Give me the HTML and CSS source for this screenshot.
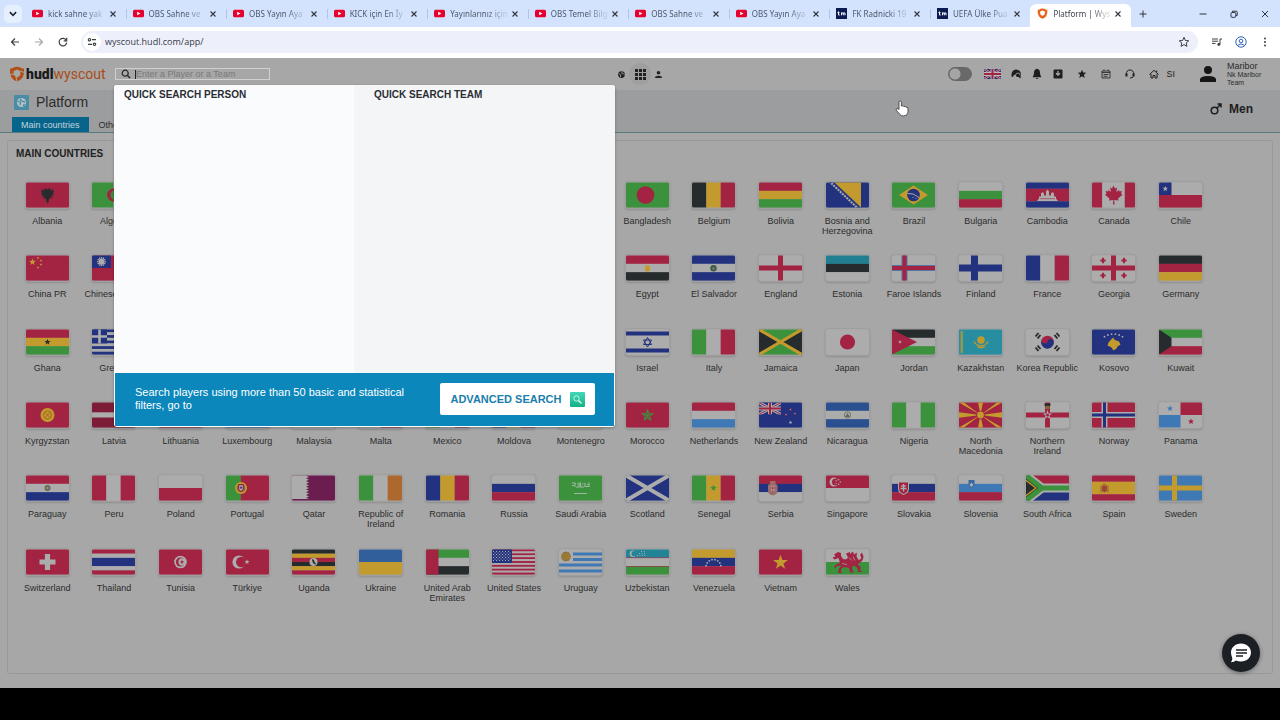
FILE: index.html
```
<!DOCTYPE html>
<html lang="en">
<head>
    <meta charset="UTF-8">
    <meta name="viewport" content="width=device-width, initial-scale=1.0">
    <title>Platform | Wyscout</title>
    <link rel="stylesheet" href="styles.css">
</head>
<body>
    <div class="tab-strip">
        <button class="tab-search" aria-label="Search tabs"><svg viewBox="0 0 8 8"><path d="M1.5 2.5 4 5l2.500-2.500" fill="none" stroke="#1f2430" stroke-width="1.300"/></svg></button>
        <div class="tabs" id="tabs"></div>
        <button class="new-tab" aria-label="New tab"><svg viewBox="0 0 10 10"><path d="M5 1.500v7M1.500 5h7" stroke="#30343c"/></svg></button>
        <div class="window-buttons">
            <button aria-label="Minimize"><svg viewBox="0 0 10 10"><path d="M1.500 5h7" stroke="#30343c"/></svg></button>
            <button aria-label="Restore"><svg viewBox="0 0 10 10"><g fill="none" stroke="#30343c"><rect x="2" y="3.500" width="4.800" height="4.800" rx="1"/><path d="M3.500 3V2.200h3.700q1 0 1 1V6.500H7"/></g></svg></button>
            <button aria-label="Close"><svg viewBox="0 0 10 10"><path d="M2 2l6 6M8 2 2 8" stroke="#30343c"/></svg></button>
        </div>
    </div>

    <div class="toolbar">
        <button aria-label="Back"><svg viewBox="0 0 10 10"><path d="M9 5H1.500M5 1.500 1.500 5 5 8.500" fill="none" stroke="#3c4043" stroke-width="1.200"/></svg></button>
        <button aria-label="Forward"><svg viewBox="0 0 10 10"><path d="M1 5h7.500M5 1.500 8.500 5 5 8.500" fill="none" stroke="#a5a8ac" stroke-width="1.200"/></svg></button>
        <button aria-label="Reload"><svg viewBox="0 0 10 10"><path d="M8.300 3.300A3.800 3.800 0 1 0 8.700 5.700M8.700.800v3H5.700" fill="none" stroke="#3c4043" stroke-width="1.200"/></svg></button>
        <div class="omnibox">
            <button class="site-info" aria-label="Site information"><svg viewBox="0 0 10 10"><g fill="none" stroke="#3c4043" stroke-width="1.200"><circle cx="2.500" cy="2.700" r="1.200"/><path d="M5 2.700h4M1 7.300h4"/><circle cx="7.500" cy="7.300" r="1.200"/></g></svg></button>
            <input type="text" class="url" aria-label="Address" value="wyscout.hudl.com/app/">
            <button aria-label="Bookmark"><svg viewBox="0 0 12 12"><path d="M6 1.300 7.400 4.500l3.400.300-2.600 2.200.8 3.400-3-1.800-3 1.800.8-3.400L1.200 4.800l3.400-.300z" fill="none" stroke="#3c4043"/></svg></button>
        </div>
        <div class="toolbar-end">
            <button aria-label="Media controls"><svg viewBox="0 0 10 10"><path d="M0 2h6M0 4.200h6M0 6.400h3.500M8 7.500V2h2" fill="none" stroke="#3c4043"/><circle cx="6.800" cy="7.500" r="1.400" fill="#3c4043"/></svg></button>
            <button aria-label="Profile"><svg viewBox="0 0 12 12"><g fill="none" stroke="#3563b8"><circle cx="6" cy="6" r="5.200"/><circle cx="6" cy="5" r="1.800"/><path d="M2.500 9.300Q6 6.700 9.500 9.300"/></g></svg></button>
            <button aria-label="Menu"><svg viewBox="0 0 10 10"><g fill="#3c4043"><circle cx="5" cy="1.500" r="1"/><circle cx="5" cy="5" r="1"/><circle cx="5" cy="8.500" r="1"/></g></svg></button>
        </div>
    </div>

    <div class="app">
        <header class="app-header">
            <div class="header-left">
                <a href="#" class="logo">
                    <svg class="logo-mark" viewBox="0 0 16 16"><path d="M1 2.500Q3.500 3 5 1.200 8 .200 11 1.200 12.500 3 15 2.500 15.600 8 13.500 11.500 11.500 14.500 8 15.500 4.500 14.500 2.500 11.500.400 8 1 2.500z" fill="#b04f17"/><path d="M8 3.500 11.500 5.200 11.300 9 8 11.700 4.700 9 4.500 5.200z" fill="#a7a7a7"/><path d="M.300 8.500 5 8M11.500 5 15 6.500M8 15.500 7 11" stroke="#a7a7a7"/></svg>
                    <b>hudl</b><span>wyscout</span>
                </a>
                <div class="search">
                    <label for="quickSearch"><svg viewBox="0 0 10 10"><circle cx="4.200" cy="4.200" r="3" fill="none" stroke="#222" stroke-width="1.200"/><path d="M6.500 6.500 9 9" stroke="#222" stroke-width="1.400"/></svg></label>
                    <i class="caret"></i>
                    <input type="text" id="quickSearch" placeholder="Enter a Player or a Team">
                    <div class="quick-search">
                        <div class="quick-results">
                            <h3>QUICK SEARCH PERSON</h3>
                            <h3>QUICK SEARCH TEAM</h3>
                        </div>
                        <div class="quick-footer">
                            <p>Search players using more than 50 basic and statistical filters, go to</p>
                            <button class="advanced">ADVANCED SEARCH
                                <svg viewBox="0 0 15 15"><defs><linearGradient id="mint" x2="0" y2="1"><stop stop-color="#43d8b8"/><stop offset="1" stop-color="#16b184"/></linearGradient></defs><rect width="15" height="15" rx="1" fill="url(#mint)"/><circle cx="6.500" cy="6.500" r="2.700" fill="none" stroke="#c9f5e6"/><path d="M8.500 8.500 11.500 11.500" stroke="#e9fff8" stroke-width="1.300"/></svg>
                            </button>
                        </div>
                    </div>
                </div>
            </div>
            <nav class="header-nav">
                <button aria-label="World"><svg viewBox="0 0 8 8"><circle cx="4" cy="4" r="3" fill="#222"/><path d="M1.500 3 3.300 4.300 3 6.300M4.500 1.500 4.200 2.800l1.500.4 1 1.300" fill="none" stroke="#a0a0a0" stroke-width=".8"/></svg></button>
                <button class="current" aria-label="Apps"><svg viewBox="0 0 11 11"><path d="M0 1.500h11M0 5.500h11M0 9.500h11" stroke="#222" stroke-width="3" stroke-dasharray="3 1"/></svg></button>
                <button aria-label="Person"><svg viewBox="0 0 8 8"><circle cx="4" cy="2.500" r="1.600" fill="#222"/><path d="M1 7V6q3-2 6 0v1z" fill="#222"/></svg></button>
            </nav>
            <div class="header-right">
                <input type="checkbox" class="toggle" aria-label="Toggle theme">
                <div class="tools tight">
                    <svg class="uk" viewBox="0 0 17 10"><path fill="#27316f" d="M0 0h17v10H0z"/><path d="M0 0 17 10M17 0 0 10" stroke="#bbb" stroke-width="2"/><path d="M0 0 17 10M17 0 0 10" stroke="#a32343"/><path d="M8.500 0v10M0 5h17" stroke="#bbb" stroke-width="4"/><path d="M8.500 0v10M0 5h17" stroke="#a32343" stroke-width="2"/></svg>
                    <button aria-label="Chat"><svg viewBox="0 0 12 12"><path d="M3 9 1.500 8.500Q1 2 6 1.500q4.500.3 5 4.500l-.5 4.500L8.500 9Q6 9.500 5.700 7L4 6.800z" fill="#1e1e1e"/><path d="M5.500 7.500Q5.500 5 8 5t2 2.500" fill="none" stroke="#a7a7a7" stroke-width=".8"/></svg></button>
                    <button aria-label="Notifications"><svg viewBox="0 0 12 12"><path d="M6 .800q3 .700 3 4 0 3.200 1.500 4.400h-9Q3 8 3 4.800q0-3.300 3-4zM4.700 10h2.600Q6 12 4.700 10z" fill="#1e1e1e"/></svg></button>
                    <button aria-label="Downloads"><svg viewBox="0 0 12 12"><rect x="1.500" y="1.500" width="9" height="9" rx="1.200" fill="#1e1e1e"/><path d="M6 3v4M4 5.200 6 7.200l2-2" fill="none" stroke="#aaa" stroke-width="1.300"/></svg></button>
                </div>
                <div class="tools">
                    <button aria-label="Favourites"><svg viewBox="0 0 12 12"><path d="M6 1.800 7.200 4.600l3.100.2-2.400 2 .8 3.100L6 8.200 3.300 9.900l.8-3.100-2.400-2 3.100-.200z" fill="#1e1e1e"/></svg></button>
                    <button aria-label="Calendar"><svg viewBox="0 0 12 12"><path d="M2 3h8v7H2zM2 4.500h8M4 1.500V3M8 1.500V3M3.500 6.500h5M3.500 8.300h4" fill="none" stroke="#1e1e1e" stroke-width=".8"/></svg></button>
                    <button aria-label="Support"><svg viewBox="0 0 12 12"><path d="M2.200 6.500Q2.200 2 6 2t3.800 4.500M9.500 8.500Q8.500 10 6 10" fill="none" stroke="#1e1e1e"/><path d="M1.500 5.500h2v3h-2zM8.500 5.500h2v3h-2z" fill="#1e1e1e"/></svg></button>
                    <button aria-label="Home"><svg viewBox="0 0 12 12"><path d="M1.500 6.500 6 2.300l4.500 4.200M3 6v4h2V7.500h2V10h2V6M8.700 4V2.500" fill="none" stroke="#1e1e1e"/></svg></button>
                </div>
                <span class="lang">SI</span>
                <svg class="avatar" viewBox="0 0 16 16"><circle cx="8" cy="4" r="4" fill="#161616"/><path d="M0 16v-3q1-3 8-3t8 3v3z" fill="#161616"/></svg>
                <div class="user">
                    <div>Maribor</div>
                    <small>Nk Maribor Team</small>
                </div>
            </div>
        </header>

        <div class="sub-header">
            <div>
                <div class="page-title">
                    <svg viewBox="0 0 15 15"><rect width="15" height="15" rx="1" fill="#4a8ca6"/><circle cx="7.500" cy="7.500" r="4.500" fill="#b5c3c8"/><path d="M3.500 6 6.500 7.500 6 10M7 3.500 6.500 5.500 9 6.500l2 .5M9 11l1.500-2" fill="none" stroke="#4a8ca6" stroke-width="1.300"/></svg>
                    <h1>Platform</h1>
                </div>
                <nav class="page-tabs">
                    <a href="#" class="active">Main countries</a>
                    <a href="#">Other countries</a>
                </nav>
            </div>
            <button class="gender"><svg viewBox="0 0 12 12"><circle cx="4.500" cy="7.500" r="3.300" fill="none" stroke="#1c1c1c" stroke-width="1.500"/><path d="M7 5 11 1M7.500 1H11v3.500" fill="none" stroke="#1c1c1c" stroke-width="1.500"/></svg>Men</button>
        </div>

        <main class="panel">
            <h2>MAIN COUNTRIES</h2>
            <ul class="countries" id="countries"></ul>
        </main>
    </div>

    <button class="chat" aria-label="Open chat"><svg viewBox="0 0 22 22"><path d="M11 1.500c5.800 0 10 4 10 9s-4.200 9-10 9q-3 0-5-1-2 1.800-5 1.800 1.500-1.800 1.300-4.300Q1 13.500 1 10.500c0-5 4.200-9 10-9z" fill="#fff"/><path d="M6 8h11M6 11h11M6 14h7" stroke="#1c2024" stroke-width="1.500"/></svg></button>
    <svg class="pointer" viewBox="0 0 14 17"><path d="M4 9V2.200q0-1.200 1.200-1.200t1.200 1.200V6q2-.800 2.400.600 1.800-.600 2.200.600 2-.400 2 1.500v3.500Q12.500 16 8.500 16 6 16 4.500 14L1.300 10.200Q.600 8.800 2 8.500q1-.100 2 1z" fill="#fff" stroke="#333" stroke-width=".8"/></svg>

    <script>
        const R = "#a32343", G = "#3c913d", Y = "#c39a2d", B = "#22327f", K = "#262b2d", W = "#acacac", L = "#3e79b5";

        function rect(x, y, w, h, c) { return `<rect x="${x}" y="${y}" width="${w}" height="${h}" fill="${c}"/>`; }
        function dot(x, y, r, c) { return `<circle cx="${x}" cy="${y}" r="${r}" fill="${c}"/>`; }
        function path(d, c) { return `<path d="${d}" fill="${c}"/>`; }
        function line(d, c, w) { return `<path d="${d}" fill="none" stroke="${c}" stroke-width="${w}"/>`; }
        // horizontal and vertical stripes, equal unless sizes are given
        function rows(colors, sizes) {
            let y = 0, out = "", s = sizes || colors.map(() => 1), t = s.reduce((a, b) => a + b);
            colors.forEach((c, i) => { const h = 25 * s[i] / t; out += rect(0, y, 43, h + 0.1, c); y += h; });
            return out;
        }
        function cols(colors, sizes) {
            let x = 0, out = "", s = sizes || colors.map(() => 1), t = s.reduce((a, b) => a + b);
            colors.forEach((c, i) => { const w = 43 * s[i] / t; out += rect(x, 0, w + 0.1, 25, c); x += w; });
            return out;
        }
        function star(cx, cy, r, c) {
            let p = [];
            for (let i = 0; i < 10; i++) {
                const q = i % 2 ? r * 0.4 : r, a = Math.PI * (i / 5 - 0.5);
                p.push((cx + q * Math.cos(a)).toFixed(2) + "," + (cy + q * Math.sin(a)).toFixed(2));
            }
            return `<polygon points="${p.join(" ")}" fill="${c}"/>`;
        }
        function plus(x, y, s, w, c) { return line(`M${x} ${y - s}v${2 * s}M${x - s} ${y}h${2 * s}`, c, w); }
        function cross(x, w, c) { return line(`M${x} 0v25M0 12.5h43`, c, w); }
        function moon(x, y, r, c, bg) { return dot(x, y, r, c) + dot(x + r * 0.35, y, r * 0.8, bg); }
        function union(w, h) {
            return `<svg width="${w}" height="${h}" viewBox="0 0 22 12" preserveAspectRatio="none">` + rect(0, 0, 22, 12, B) +
                line("M0 0 22 12M22 0 0 12", W, 3) + line("M0 0 22 12M22 0 0 12", R, 1) +
                line("M11 0v12M0 6h22", W, 4) + line("M11 0v12M0 6h22", R, 2) + "</svg>";
        }
        function ring(n, cx, cy, r, from, to, size, c) {
            let out = "";
            for (let i = 0; i < n; i++) {
                const a = (from + (to - from) * i / (n - 1)) * Math.PI / 180;
                out += dot(cx + r * Math.cos(a), cy + r * Math.sin(a), size, c);
            }
            return out;
        }

        const flags = [
            ["Albania", rows([R]) + path("M21.500 7.500 20 5.500l-1.500 1 .5 1.500-3.500-1.500.8 2-1.800.5 1.800 1.500-1.300 1.500 2 .2-1 2 2.400-.5-1.400 3 2.500-1.500 1 4 1 1.500 1-1.500 1-4 2.500 1.500-1.400-3 2.400.5-1-2 2-.2-1.300-1.500 1.800-1.500-1.800-.5.8-2L24 8l.5-1.500-1.500-1z", K)],
            ["Algeria", cols([G, W]) + moon(21.5, 12.5, 6.5, R, G) + star(24, 12.5, 3, R)],
            ["Bangladesh", rows([G]) + dot(19.5, 12.5, 8.8, R), 10],
            ["Belgium", cols([K, Y, R])],
            ["Bolivia", rows([R, Y, G])],
            ["Bosnia and Herzegovina", rows([B]) + path("M8.500 0H35v25z", Y) + line("M4.500 0 31 25", W, 2) + line("M4.500 0 31 25", B, "2.2\" stroke-dasharray=\"1 2")],
            ["Brazil", rows([G]) + path("M21.500 3 36 12.500 21.500 22 7 12.500z", Y) + dot(21.5, 12.5, 6.3, B) + line("M15.500 11Q21 10 27 15", W, 1) + dot(21, 15, 0.6, W) + dot(24, 16, 0.5, W)],
            ["Bulgaria", rows([W, G, R])],
            ["Cambodia", rows([B, R, B], [1, 2, 1]) + path("M11 18.500 13 16v-2h2v-3l1.500-1.500L18 11v2h2V9l1.500-2L23 9v4h2v-2l1.500-1.500L28 11v3h2v2l2 2.500z", W) + line("M14 16.200h15", R, 0.6)],
            ["Canada", cols([R, W, R], [1, 2.2, 1]) + path("M21.500 3 23 6l2-1-.6 4.500L27 7.500l.5 1.500 2.500-.5-1 2.700 1.500 1-4.500 3.800.5 2-4.300-.5.300 4.500h-1.500l.3-4.500-4.300.5.5-2-4.500-3.800 1.500-1-1-2.700 2.500.5.5-1.500 2.600 2L18 5l2 1z", R)],
            ["Chile", rows([W, R]) + rect(0, 0, 12.500, 12.500, B) + star(6.3, 6.2, 3, W)],
            ["China PR", rows([R]) + star(6.5, 6.500, 3.600, Y) + star(12, 2.500, 1.500, Y) + star(15, 5, 1.500, Y) + star(15, 9, 1.500, Y) + star(12, 12, 1.500, Y)],
            ["Chinese Taipei", rows([R]) + rect(0, 0, 19, 12.500, B) + ring(12, 9.5, 6.2, 3.8, 0, 330, 0.8, W) + dot(9.5, 6.2, 3, W)],
            ["Egypt", rows([R, W, K]) + path("M19 10h5v5l-2.500 1.500L19 15z", Y), 10],
            ["El Salvador", rows([B, W, B]) + dot(21.5, 12.8, 3.2, "#3c5950") + dot(21.5, 13, 1.3, "#817b56")],
            ["England", rows([W]) + cross(21.5, 5, R)],
            ["Estonia", rows(["#217f94", K, W])],
            ["Faroe Islands", rows([W]) + cross(12.5, 6, "#5474a2") + cross(12.5, 4, R)],
            ["Finland", rows([W]) + cross(15.5, 7, B)],
            ["France", cols([B, W, R])],
            ["Georgia", rows([W]) + cross(21.5, 5, R) + plus(11, 5, 2.7, 2, R) + plus(32, 5, 2.7, 2, R) + plus(11, 20, 2.7, 2, R) + plus(32, 20, 2.7, 2, R)],
            ["Germany", rows([K, R, Y])],
            ["Ghana", rows([R, Y, G]) + star(21.5, 12.5, 3.3, K)],
            ["Greece", rows([B, W, B, W, B, W, B, W, B]) + rect(0, 0, 15, 13.9, B) + line("M7.500 0v13.900M0 7h15", W, 2.600)],
            ["Israel", rows([W]) + rect(0, 2, 43, 4, B) + rect(0, 19, 43, 4, B) + line("M21.500 8 25.500 15h-8zM21.500 17.500 17.500 10.500h8z", B, 1), 10],
            ["Italy", cols([G, W, R])],
            ["Jamaica", rows([G]) + path("M0 0 21.500 12.500 0 25zM43 0 21.500 12.500 43 25z", K) + line("M0 0 43 25M43 0 0 25", Y, 3.2)],
            ["Japan", rows([W]) + dot(21.5, 12.5, 7.6, R)],
            ["Jordan", rows([K, W, G]) + path("M0 0 25 12.500 0 25z", R) + star(8, 12.5, 2, W)],
            ["Kazakhstan", rows(["#278da0"]) + rect(1.500, 1.500, 2.500, 22, "#93984f") + dot(22, 10.5, 3.7, Y) + line("M15 12q2 4 7 4.500 5-.5 7-4.500M18 17q4 2.500 8 0", Y, 1.300)],
            ["Korea Republic", rows([W]) + dot(21.5, 12.5, 6.3, R) + path("M15.600 10.500a3.200 3.200 0 0 0 5.900 2 3.200 3.200 0 0 1 6-1.300 6.300 6.300 0 1 1-11.900-.7z", B) + line("M9.500 7 12.500 3.500M11.500 9 14.500 5.500M28.500 5.500 31.500 9M30.500 3.500 33.500 7M9.500 18l3 3.500M11.500 16l3 3.500M28.500 19.500l3-3.500M30.500 21.500 33.500 18", K, 1.900)],
            ["Kosovo", rows([B]) + path("M21 8l2 2.500 4 1.500 1.500 3-3 2-1 2-3 2-2-3-4-2 1-3z", Y) + ring(6, 21.5, 21, 16.500, -123, -57, 0.9, W)],
            ["Kuwait", rows([G, W, R]) + path("M0 0 12.500 8.300v8.400L0 25z", K)],
            ["Kyrgyzstan", rows([R]) + dot(21.5, 12.5, 7, Y) + `<circle cx="21.500" cy="12.500" r="4" fill="none" stroke="#a66525"/>` + line("M19 10 24 15M24 10 19 15", "#a66525", 1)],
            ["Latvia", rows(["#7d1c36", W, "#7d1c36"], [2, 1, 2])],
            ["Lithuania", rows([Y, G, R])],
            ["Luxembourg", rows([R, W, L])],
            ["Malaysia", rows([R, W, R, W, R, W, R, W]) + rect(0, 0, 21, 12, B)],
            ["Malta", cols([W, R])],
            ["Mexico", cols([G, W, R])],
            ["Moldova", cols([B, Y, R])],
            ["Montenegro", rows([Y]) + rect(2, 2, 39, 21, R)],
            ["Morocco", rows([R]) + star(21.5, 13, 7, G) + star(21.5, 13, 3.500, R) + dot(21.5, 13, 1.400, G)],
            ["Netherlands", rows([R, W, L])],
            ["New Zealand", rows([B]) + union(22, 12) + star(31.5, 7, 1.800, R) + star(27, 12, 1.800, R) + star(36, 11, 1.800, R) + star(31.500, 20, 2, W) + star(31.500, 7, 1, W) + star(27, 12, 1, W) + star(36, 11, 1, W)],
            ["Nicaragua", rows(["#2b5090", W, "#2b5090"]) + `<circle cx="21.500" cy="12.500" r="3.200" fill="none" stroke="#777a5e"/>` + path("M21.500 10.500 24 14.500h-5z", "#566b69")],
            ["Nigeria", cols([G, W, G])],
            ["North Macedonia", rows([R]) + path("M0 0h5l16.500 12.500L38 0h5L21.500 12.500 43 25h-5L21.500 12.500 5 25H0l21.500-12.500zM19 0h5l-2.500 12.500L24 25h-5l2.500-12.500zM0 9.800 21.500 12.500 0 15.200zM43 9.800 21.500 12.500 43 15.200z", Y) + dot(21.5, 12.5, 4.300, R) + dot(21.5, 12.5, 3.400, Y)],
            ["Northern Ireland", rows([W]) + cross(21.5, 5, R) + star(21.5, 12.5, 5, W) + dot(21.5, 12.5, 1.500, R) + rect(19.500, 3, 4, 3.500, "#7c6a37") + rect(18.500, 1, 6, 2.300, K)],
            ["Norway", rows([R]) + cross(12.5, 6, W) + cross(12.5, 3, B)],
            ["Panama", rows([W]) + rect(21.500, 0, 21.500, 12.500, R) + rect(0, 12.500, 21.500, 12.500, L) + star(11, 6, 3.300, L) + star(32, 19, 3.300, R)],
            ["Paraguay", rows([R, W, B]) + dot(21.5, 12.5, 3, "#68685b") + dot(21.5, 12.5, 1.200, "#998f60")],
            ["Peru", cols([R, W, R])],
            ["Poland", rows([W, R])],
            ["Portugal", cols([G, R], [1, 1.900]) + dot(15, 12.5, 6, Y) + dot(15, 12.5, 4.300, "#7d7134") + path("M12 8.500h6v5q0 2-3 3-3-1-3-3z", R) + path("M13.200 9.700h3.600v3.800q0 1-1.800 1.800-1.800-.800-1.800-1.800z", W) + plus(15, 12.2, 1.2, 0.9, B)],
            ["Qatar", rows(["#6b1d50"]) + path("M0 0h14l3 1.400-3 1.400 3 1.400-3 1.400L17 7l-3 1.400 3 1.400-3 1.400 3 1.300-3 1.400 3 1.400-3 1.400 3 1.400-3 1.400 3 1.400-3 1.400 3 1.300H0z", W)],
            ["Republic of Ireland", cols([G, W, "#ae682e"])],
            ["Romania", cols([B, Y, R])],
            ["Russia", rows([W, B, R])],
            ["Saudi Arabia", rows([G]) + line("M13 7.500h3v4M17 11.500h3V7M21.500 7v4.500H25M26 7.500v3.500h4V7M13 10h2M18 8.500h1M23 8.500h1.500M28 9h1", "#a0b89e", 1.200) + line("M15 18h13", "#a0b89e", 1)],
            ["Scotland", rows([B]) + line("M0 0 43 25M43 0 0 25", W, 4)],
            ["Senegal", cols([G, Y, R]) + star(21.5, 12.5, 3.500, G)],
            ["Serbia", rows([R, B, W]) + path("M11 5.500h5.500v3l2 1v6q0 3-4.700 4.500Q9 18.500 9 15.500v-6l2-1z", "#9b6d68") + rect(12.300, 10, 3.200, 6, W) + line("M13.900 10v7M12 12.500h4", R, 0.8)],
            ["Singapore", rows([R, W]) + moon(8, 6.500, 4.500, W, R) + ring(5, 12, 6.5, 2.300, 0, 288, 0.700, W)],
            ["Slovakia", rows([W, B, R]) + path("M6 6h11v7q0 4.500-5.500 6.500Q6 17.500 6 13z", W) + path("M7 7h9v6q0 3.800-4.500 5.500Q7 16.800 7 13z", R) + line("M11.500 8.500V16M9.300 10.500h4.400M8.500 13h6", W, 1.300)],
            ["Slovenia", rows([W, L, R]) + path("M9.500 4.500h6v4q0 2.500-3 4-3-1.500-3-4z", "#3469a3") + path("M10.500 9.500 12.500 7l2 2.500-2 2z", W)],
            ["South Africa", rows([R, B]) + line("M0 0 16 12.500 0 25M16 12.500h27", W, 9) + path("M0 0 16 12.500 0 25z", K) + line("M0 0 16 12.500 0 25M16 12.500h27", G, 5) + path("M0 4 11 12.500 0 21z", Y) + path("M0 5.800 8.800 12.500 0 19.200z", K)],
            ["Spain", rows([R, Y, R], [1, 2, 1]) + path("M10 10h5v5.500l-2.500 1.500-2.500-1.500z", "#9a4939") + line("M9 10v7M16 10v7M11 8.800h3", "#93602e", 1)],
            ["Sweden", rows([L]) + cross(15.5, 5, Y)],
            ["Switzerland", rows([R]) + plus(21.5, 12.5, 8, 5.200, W)],
            ["Thailand", rows([R, W, B, W, R], [1, 1, 2, 1, 1])],
            ["Tunisia", rows([R]) + dot(21.5, 12.5, 6.300, W) + moon(21.5, 12.5, 4.600, R, W) + star(23, 12.5, 2.300, R)],
            ["Türkiye", rows([R]) + moon(13, 12.5, 6.600, W, R) + star(21, 12.5, 2.800, W)],
            ["Uganda", rows([K, Y, R, K, Y, R]) + dot(21.5, 12.5, 4, W) + path("M20 9.500l2 1 .5 2 2 2.500-2.500-.500-1.500-2z", K)],
            ["Ukraine", rows(["#315f9c", Y])],
            ["United Arab Emirates", rows([G, W, K]) + rect(0, 0, 12.500, 25, R)],
            ["United States", rows([R, W, R, W, R, W, R, W, R, W, R, W, R]) + rect(0, 0, 20, 13.500, B) + line("M1 2h18M1 5h18M1 8h18M1 11h18", W, "1\" stroke-dasharray=\"1 2") + line("M2.500 3.500h17M2.500 6.500h17M2.500 9.500h17", W, "1\" stroke-dasharray=\"1 2")],
            ["Uruguay", rows([W]) + rect(14, 3, 29, 3, L) + rect(14, 8.500, 29, 3, L) + rect(0, 14, 43, 3, L) + rect(0, 20, 43, 3, L) + ring(12, 7, 7, 4, 0, 330, 1.100, "#89703a") + dot(7, 7, 3.500, "#9c792c")],
            ["Uzbekistan", rows(["#218597", W, G]) + rect(0, 8, 43, 0.6, R) + rect(0, 16.500, 43, 0.6, R) + moon(7, 4.200, 3.300, W, "#218597") + line("M11 6h9M13 4h7M15 2h5", W, "1\" stroke-dasharray=\"1 1.5")],
            ["Venezuela", rows([Y, B, R]) + ring(8, 21.5, 17.500, 7.500, -170, -10, 0.900, W)],
            ["Vietnam", rows([R]) + star(21.5, 13, 7.800, Y)],
            ["Wales", rows([W, G]) + path("M8 5 12 2.500l3 1v3l2 3 3 .500 2-2L20 4l4-1.500V4.500l3-2.500L28 5l3-2-.5 4 2 3.500q3.500-1 2.500-3.500l-1-1.500L36 3l1.500 4q-.5 5-4 6l-1.500 2 3 3-1 3 3 1.500h-5l-.500-4-3.500-2.500-2 1.500 1 4.500 1.500 1h-4.500l-1-4.500-5-1-3 2v3l2 1h-5l1-4.500 2.500-3-4 .500-2.500 2-1-1.500 3-2.500 3-1-1.500-5-4 1.500L6.500 8l3-1z", R) + line("M23 8l3 3M27 7l2 4M16 14l5 1", W, 0.7)]
        ];

        const list = document.getElementById("countries");
        flags.forEach(([name, art, column]) => {
            list.innerHTML += `<li${column ? ' class="after-search"' : ""}><a href="#">
                <svg viewBox="0 0 43 25" aria-hidden="true">${art}</svg>
                <span>${name}</span>
            </a></li>`;
        });

        const youtube = `<svg viewBox="0 0 11 11">${path("M1.500 1.800h8q1.500 0 1.500 1.500v4.400q0 1.500-1.500 1.500h-8Q0 9.200 0 7.700V3.300q0-1.500 1.500-1.500z", "#e6002d")}${path("M4.200 3.700 7.500 5.500 4.200 7.300z", "#fff")}</svg>`;
        const tm = `<svg viewBox="0 0 11 11">${rect(0, 0, 11, 11, "#0c1a52")}${line("M2.500 3.500v3.500h1.200M1.500 4.600h2M5.500 7.300V4.500M5.500 5h3.500v2.300M7.300 5v2.300", "#fff", 1)}</svg>`;
        const wyscout = `<svg viewBox="0 0 16 16">${path("M1 2.500Q3.500 3 5 1.200 8 .200 11 1.200 12.500 3 15 2.500 15.600 8 13.500 11.500 11.500 14.500 8 15.500 4.500 14.500 2.500 11.500.400 8 1 2.500z", "#e8641b")}${path("M8 3.500 11.500 5.200 11.300 9 8 11.700 4.700 9 4.500 5.200z", "#fff")}</svg>`;
        const tabs = [
            ["kick sahne yak", youtube], ["OBS Sahne ve", youtube], ["OBS Yayın Aya", youtube],
            ["KICK için En İy", youtube], ["Yayınlarınız için", youtube], ["OBS Temel Bilg", youtube],
            ["OBS Sahne ve", youtube], ["OBS Yayın Aya", youtube], ["FK Radnicki 19", tm],
            ["UEFA Ülke Pua", tm], ["Platform | Wys", wyscout]
        ];
        document.getElementById("tabs").innerHTML = tabs.map(([title, icon], i) => `
            <div class="tab${i === tabs.length - 1 ? " open" : ""}">
                ${icon}<span>${title}</span>
                <button aria-label="Close tab"><svg viewBox="0 0 8 8">${line("M1.500 1.500l5 5M6.500 1.500l-5 5", "#30343c", 1.1)}</svg></button>
            </div>`).join("");
    </script>
</body>
</html>
```
FILE: styles.css
```
* {
    box-sizing: border-box;
}
body {
    margin: 0;
    min-height: 100vh;
    padding-bottom: 32px;
    display: flex;
    flex-direction: column;
    position: relative;
    background: #000;
    color: #2c2c2c;
    font-family: "Liberation Sans", Arial, sans-serif;
    font-size: 9px;
}
h1, h2, h3, p, ul {
    margin: 0;
    padding: 0;
}
button {
    display: flex;
    align-items: center;
    justify-content: center;
    padding: 0;
    border: none;
    background: none;
    font-family: inherit;
    cursor: pointer;
}
button svg {
    width: 10px;
    height: 10px;
}
a {
    color: inherit;
    text-decoration: none;
}

/* browser tabs */
.tab-strip {
    height: 27px;
    display: flex;
    align-items: center;
    background: #d4e3fd;
    font-family: "Noto Sans", "Open Sans", sans-serif;
    font-size: 8px;
}
.tab-search {
    width: 18px;
    height: 18px;
    margin: 0 3px 0 4px;
    border-radius: 5px;
    background: #e6effe;
}
.tabs {
    flex: 1;
    display: flex;
    align-self: stretch;
    min-width: 0;
}
.tab {
    flex: 1;
    min-width: 0;
    display: flex;
    align-items: center;
    padding: 0 9px 0 7px;
    color: #4c586c;
}
.tab + .tab:not(.open) {
    background: linear-gradient(#b3c5e4, #b3c5e4) 0 50% / 1px 10px no-repeat;
}
.tab > svg {
    width: 11px;
    height: 11px;
    flex: none;
}
.tab span {
    flex: 1;
    margin-left: 5px;
    white-space: nowrap;
    -webkit-mask-image: linear-gradient(to right, #000 60%, rgba(0, 0, 0, 0.2) 90%);
    mask-image: linear-gradient(to right, #000 60%, rgba(0, 0, 0, 0.2) 90%);
}
.tab button svg {
    width: 8px;
    height: 8px;
}
.tab.open {
    margin-top: 4px;
    padding-bottom: 4px;
    border-radius: 6px 6px 0 0;
    background: #fff;
    color: #3a3f48;
}
.new-tab {
    width: 24px;
}
.window-buttons {
    display: flex;
    width: 125px;
    padding-left: 33px;
}
.window-buttons button {
    flex: 1;
}

/* address bar */
.toolbar {
    height: 31px;
    display: flex;
    align-items: center;
    gap: 14px;
    padding: 0 10px 2px;
    background: #fff;
}
.omnibox {
    flex: 1;
    height: 22px;
    display: flex;
    align-items: center;
    margin-left: -1px;
    padding: 0 8px 0 2px;
    border-radius: 11px;
    background: #edf0fb;
}
.site-info {
    width: 18px;
    height: 18px;
    border-radius: 50%;
    background: #fff;
}
.omnibox button:last-child svg {
    width: 12px;
    height: 12px;
}
.url {
    flex: 1;
    margin-left: 4px;
    padding: 0;
    border: none;
    background: none;
    color: #363b44;
    font: 9px "Open Sans", "Noto Sans", sans-serif;
}
.toolbar-end {
    display: flex;
    gap: 13px;
}
.toolbar-end button:nth-child(2) svg {
    width: 12px;
    height: 12px;
}

/* application */
.app {
    flex: 1;
    display: flex;
    flex-direction: column;
    background: #a7a7a7;
}
.app-header {
    height: 32px;
    display: grid;
    grid-template-columns: 1fr auto 1fr;
    align-items: center;
    padding: 0 15px 0 9px;
}
.header-left, .header-right, .tools {
    display: flex;
    align-items: center;
}
.logo {
    display: flex;
    align-items: center;
    width: 106px;
    font-family: Roboto, sans-serif;
    font-size: 14px;
    color: #1b1b1b;
}
.logo b {
    font-weight: 900;
}
.logo span {
    color: #a94c18;
}
.logo-mark {
    width: 16px;
    height: 16px;
    margin-right: 1px;
}
.search {
    position: relative;
    width: 155px;
    height: 12px;
    display: flex;
    align-items: center;
    border: 1px solid #d0d0d0;
}
.search label {
    width: 19px;
    height: 10px;
    padding-left: 5px;
}
.search label svg {
    width: 10px;
    height: 10px;
    display: block;
}
.caret {
    width: 1px;
    height: 9px;
    background: #222;
}
.search input {
    flex: 1;
    min-width: 0;
    padding: 0;
    border: none;
    outline: none;
    background: none;
    font: 9px/10px "Liberation Sans", Arial, sans-serif;
}
.search input::placeholder {
    color: #797979;
}
.quick-search {
    position: absolute;
    top: 16px;
    left: -2px;
    z-index: 2;
    width: 501px;
    border-radius: 3px;
    overflow: hidden;
    background: #fff;
    box-shadow: 0 1px 3px rgba(0, 0, 0, 0.3);
}
.quick-results {
    display: grid;
    grid-template-columns: 240px 1fr;
    height: 288px;
}
.quick-results h3 {
    padding: 4px 10px;
    background: #fafbfd;
    color: #2a2d33;
    font-size: 10px;
    line-height: 11px;
}
.quick-results h3 + h3 {
    padding-left: 20px;
    background: #f4f5f7;
}
.quick-footer {
    display: flex;
    align-items: center;
    justify-content: space-between;
    margin: 0 1px 1px;
    padding: 10px 19px 11px 20px;
    background: #0b87bb;
}
.quick-footer p {
    width: 290px;
    color: #fff;
    font-size: 11px;
    line-height: 13px;
}
.advanced {
    width: 155px;
    height: 32px;
    gap: 8px;
    border-radius: 2px;
    background: #fff;
    color: #1b7eac;
    font-size: 11px;
    font-weight: bold;
    white-space: nowrap;
}
.advanced svg {
    width: 15px;
    height: 15px;
}
.header-nav {
    display: flex;
    align-items: center;
    gap: 3px;
    padding-left: 6px;
}
.header-nav button svg {
    width: 9px;
    height: 9px;
}
.header-nav .current {
    width: 22px;
    height: 22px;
    border-radius: 50%;
    background: #9f9f9f;
}
.header-nav .current svg {
    width: 11px;
    height: 11px;
}
.header-right {
    justify-content: flex-end;
}
.toggle {
    appearance: none;
    width: 24px;
    height: 14px;
    margin: 0 12px 0 0;
    border: 1px solid #666;
    border-radius: 7px;
    background: radial-gradient(circle at 6px 6px, #a5a5a5 5px, #696969 6px);
}
.tools {
    gap: 12px;
}
.tools.tight {
    gap: 9px;
    margin-right: 12px;
}
.tools svg {
    width: 12px;
    height: 12px;
}
.tools .uk {
    width: 17px;
    height: 10px;
}
.lang {
    margin: 0 25px 0 6px;
    color: #1e1e1e;
}
.avatar {
    width: 16px;
    height: 16px;
    margin-right: 11px;
}
.user {
    width: 38px;
    line-height: 9px;
}
.user small {
    display: block;
    font-size: 7px;
    line-height: 8px;
}
.sub-header {
    height: 43px;
    display: flex;
    align-items: center;
    justify-content: space-between;
    padding: 0 27px 0 12px;
    border-bottom: 1px solid #587a7d;
    background: #9c9d9e;
}
.page-title {
    display: flex;
    align-items: center;
    gap: 7px;
    height: 24px;
    margin-bottom: 3px;
    padding-left: 2px;
}
.page-title svg {
    width: 15px;
    height: 15px;
}
.page-title h1 {
    font-size: 14px;
    font-weight: normal;
}
.page-tabs {
    display: flex;
}
.page-tabs a {
    height: 15px;
    padding: 0 9px;
    margin-right: 1px;
    line-height: 16px;
}
.page-tabs .active {
    background: #07658b;
    color: #c3d4dc;
}
.gender {
    gap: 7px;
    margin-bottom: 4px;
    color: #202020;
    font-size: 12px;
    font-weight: bold;
}
.gender svg {
    width: 12px;
    height: 12px;
}
.panel {
    flex: 1;
    margin: 7px 7px 14px;
    border: 1px solid #999;
    border-radius: 2px;
}
.panel h2 {
    padding: 7px 8px;
    color: #222;
    font-size: 10px;
    line-height: 11px;
}
.countries {
    display: grid;
    grid-template-columns: repeat(18, 1fr);
    grid-auto-rows: 1fr;
    min-height: 440px;
    margin: 16px 58px 0 6px;
    list-style: none;
}
.after-search {
    grid-column: 10;
}
.countries a {
    display: flex;
    flex-direction: column;
    align-items: center;
    gap: 8px;
    padding: 0 2px;
    line-height: 10px;
    text-align: center;
}
.countries a > svg {
    width: 43px;
    height: 26px;
    border-radius: 2px;
    box-shadow: 0 0 0 1px #9f9f9f, 0 1px 2px 1px rgba(0, 0, 0, 0.15);
}

/* things floating over the page */
.chat {
    position: absolute;
    right: 20px;
    bottom: 48px;
    width: 38px;
    height: 38px;
    border-radius: 50%;
    background: #1c2024;
    box-shadow: 0 1px 4px rgba(0, 0, 0, 0.4);
}
.chat svg {
    width: 22px;
    height: 22px;
}
.pointer {
    position: absolute;
    top: 100px;
    left: 895px;
    width: 14px;
    height: 17px;
}
```
